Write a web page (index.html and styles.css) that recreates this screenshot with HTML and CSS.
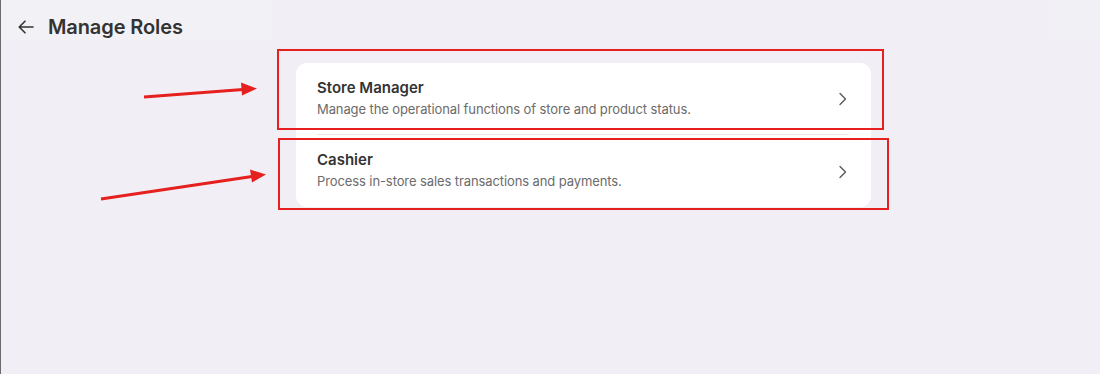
FILE: index.html
```html
<!DOCTYPE html>
<html>
<head>
<meta charset="utf-8">
<link rel="stylesheet" href="styles.css">
</head>
<body>
<div class="page">
  <header class="topbar">
    <div class="topbar-left">
      <svg class="back" width="20" height="20" viewBox="0 0 20 20"><path d="M17 10H3.5M9 4.2L3.2 10L9 15.8" fill="none" stroke="#333" stroke-width="1.6" stroke-linecap="round" stroke-linejoin="round"/></svg>
      <h1 class="title">Manage Roles</h1>
    </div>
    <div class="topbar-mid"></div>
    <div class="topbar-right"></div>
  </header>
  <main class="content">
    <div class="card">
      <div class="row">
        <div class="row-text">
          <div class="row-title">Store Manager</div>
          <div class="row-desc">Manage the operational functions of store and product status.</div>
        </div>
        <svg class="chev" width="12" height="16" viewBox="0 0 12 16"><path d="M3 2.5L8.5 8L3 13.5" fill="none" stroke="#555" stroke-width="1.3" stroke-linecap="round" stroke-linejoin="round"/></svg>
      </div>
      <div class="sep"></div>
      <div class="row row-last">
        <div class="row-text">
          <div class="row-title">Cashier</div>
          <div class="row-desc">Process in-store sales transactions and payments.</div>
        </div>
        <svg class="chev" width="12" height="16" viewBox="0 0 12 16"><path d="M3 2.5L8.5 8L3 13.5" fill="none" stroke="#555" stroke-width="1.3" stroke-linecap="round" stroke-linejoin="round"/></svg>
      </div>
    </div>
  </main>
  <div class="mark mark-1"></div>
  <div class="mark mark-2"></div>
  <svg class="arrows" width="1100" height="374" viewBox="0 0 1100 374">
    <path d="M144 97L243 89.5" stroke="#e5201f" stroke-width="3" fill="none"/>
    <path d="M257 88.5L241 82.5L242 95.5Z" fill="#e5201f"/>
    <path d="M101 199L252 176.5" stroke="#e5201f" stroke-width="3" fill="none"/>
    <path d="M266 174.5L250 169.5L252 182.5Z" fill="#e5201f"/>
  </svg>
</div>
</body>
</html>
```

FILE: styles.css
```css
* { box-sizing: border-box; }
html, body { margin: 0; padding: 0; }
body {
  width: 1100px;
  height: 374px;
  overflow: hidden;
  background: #f1eff5;
  font-family: Inter, "Noto Sans", sans-serif;
}
.page {
  position: relative;
  width: 1100px;
  height: 374px;
  border-left: 1px solid #6b6b6b;
}
.topbar {
  display: flex;
  height: 40px;
}
.topbar-left {
  width: 271px;
  background: #f2f1f5;
  display: flex;
  align-items: center;
  padding-left: 15px;
  padding-top: 14px;
  gap: 12px;
  height: 40px;
}
.topbar-mid { flex: 1; }
.topbar-right { width: 52px; background: #f1f0f4; }
.back { display: block; }
.title {
  margin: 0;
  font-size: 20px;
  font-weight: 600;
  color: #333333;
  letter-spacing: -0.1px;
  line-height: 26px;
}
.content {
  padding-top: 23px;
  padding-left: 295px;
}
.card {
  width: 575px;
  background: #ffffff;
  border-radius: 11px;
}
.row {
  height: 71px;
  display: flex;
  align-items: center;
  padding: 0 22px 0 21px;
}
.row-last { height: 72px; }
.row-text { flex: 1; margin-top: -1px; }
.row-title {
  font-size: 15px;
  font-weight: 600;
  color: #333333;
  line-height: 20px;
}
.row-desc {
  font-size: 13px;
  color: #6b6b6b;
  line-height: 20px;
  margin-top: 1px;
  letter-spacing: -0.1px;
}
.chev { display: block; margin-top: 1px; }
.sep {
  height: 1px;
  background: #e8e8ec;
  margin: 0 22px 0 21px;
}
.mark {
  position: absolute;
  border: 2px solid #e5201f;
}
.mark-1 { left: 276px; top: 49px; width: 607px; height: 81px; }
.mark-2 { left: 277px; top: 138px; width: 611px; height: 72px; }
.arrows { position: absolute; left: -1px; top: 0; }
```
